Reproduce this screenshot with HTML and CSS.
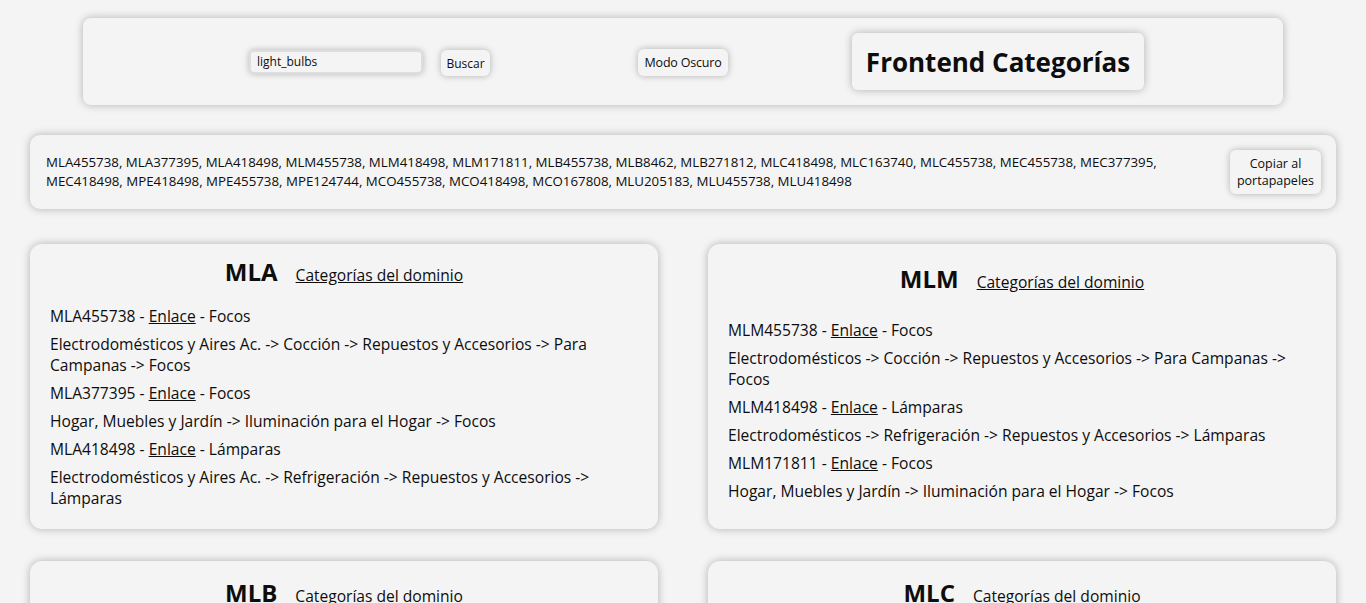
FILE: index.html
```html
<!DOCTYPE html>
<html lang="es">
<head>
<meta charset="utf-8">
<title>Frontend Categorías</title>
<link rel="stylesheet" href="styles.css">
</head>
<body>
<header class="topbar">
  <form class="search">
    <input class="search-input" type="text" value="light_bulbs">
    <button class="btn btn-search" type="button">Buscar</button>
  </form>
  <button class="btn btn-mode" type="button">Modo Oscuro</button>
  <h1 class="title">Frontend Categorías</h1>
</header>

<section class="codes">
  <p class="codes-text">MLA455738, MLA377395, MLA418498, MLM455738, MLM418498, MLM171811, MLB455738, MLB8462, MLB271812, MLC418498, MLC163740, MLC455738, MEC455738, MEC377395, MEC418498, MPE418498, MPE455738, MPE124744, MCO455738, MCO418498, MCO167808, MLU205183, MLU455738, MLU418498</p>
  <button class="btn btn-copy" type="button">Copiar al<br>portapapeles</button>
</section>

<main class="grid">
  <article class="card">
    <div class="card-head"><h2>MLA</h2><a href="#">Categorías del dominio</a></div>
    <div class="card-list">
      <p>MLA455738 - <a href="#">Enlace</a> - Focos</p>
      <p>Electrodomésticos y Aires Ac. -&gt; Cocción -&gt; Repuestos y Accesorios -&gt; Para Campanas -&gt; Focos</p>
      <p>MLA377395 - <a href="#">Enlace</a> - Focos</p>
      <p>Hogar, Muebles y Jardín -&gt; Iluminación para el Hogar -&gt; Focos</p>
      <p>MLA418498 - <a href="#">Enlace</a> - Lámparas</p>
      <p>Electrodomésticos y Aires Ac. -&gt; Refrigeración -&gt; Repuestos y Accesorios -&gt; Lámparas</p>
    </div>
  </article>
  <article class="card">
    <div class="card-head"><h2>MLM</h2><a href="#">Categorías del dominio</a></div>
    <div class="card-list">
      <p>MLM455738 - <a href="#">Enlace</a> - Focos</p>
      <p>Electrodomésticos -&gt; Cocción -&gt; Repuestos y Accesorios -&gt; Para Campanas -&gt; Focos</p>
      <p>MLM418498 - <a href="#">Enlace</a> - Lámparas</p>
      <p>Electrodomésticos -&gt; Refrigeración -&gt; Repuestos y Accesorios -&gt; Lámparas</p>
      <p>MLM171811 - <a href="#">Enlace</a> - Focos</p>
      <p>Hogar, Muebles y Jardín -&gt; Iluminación para el Hogar -&gt; Focos</p>
    </div>
  </article>
  <article class="card card-low">
    <div class="card-head"><h2>MLB</h2><a href="#">Categorías del dominio</a></div>
    <div class="card-list">
      <p>MLB455738 - <a href="#">Enlace</a> - Focos</p>
      <p>Eletrodomésticos -&gt; Fornos e Fogões -&gt; Peças e Acessórios -&gt; Lâmpadas</p>
      <p>MLB8462 - <a href="#">Enlace</a> - Lâmpadas</p>
      <p>Casa, Móveis e Decoração -&gt; Iluminação Residencial -&gt; Lâmpadas</p>
    </div>
  </article>
  <article class="card card-low">
    <div class="card-head"><h2>MLC</h2><a href="#">Categorías del dominio</a></div>
    <div class="card-list">
      <p>MLC418498 - <a href="#">Enlace</a> - Ampolletas</p>
      <p>Electrodomésticos -&gt; Refrigeración -&gt; Repuestos y Accesorios -&gt; Ampolletas</p>
      <p>MLC163740 - <a href="#">Enlace</a> - Ampolletas</p>
      <p>Hogar, Muebles y Jardín -&gt; Iluminación -&gt; Ampolletas</p>
    </div>
  </article>
</main>
</body>
</html>
```
FILE: styles.css
```css
* { box-sizing: border-box; }

body {
  margin: 0;
  padding: 18px 30px 40px;
  background: #f4f4f4;
  color: #0d0d0d;
  font-family: "Open Sans", "Noto Sans", sans-serif;
}

.topbar {
  width: 1200px;
  height: 87px;
  margin: 0 auto;
  display: flex;
  align-items: center;
  padding-left: 166px;
  background: #f4f4f4;
  border-radius: 8px;
  box-shadow: 0 0 8px rgba(0, 0, 0, 0.28);
}

.search {
  display: flex;
  align-items: center;
  margin: 0;
}

.search-input {
  width: 174px;
  height: 24px;
  padding: 0 6px;
  border: 2px solid #dedede;
  border-radius: 5px;
  background: #f4f4f4;
  font-family: inherit;
  font-size: 12px;
  color: #0d0d0d;
  box-shadow: 0 0 6px rgba(0, 0, 0, 0.25);
  outline: none;
}

.btn {
  font-family: inherit;
  font-size: 12px;
  color: #0d0d0d;
  background: #f4f4f4;
  border: none;
  border-radius: 6px;
  box-shadow: 0 0 7px rgba(0, 0, 0, 0.28);
  cursor: pointer;
}

.btn-search {
  margin-left: 18px;
  width: 49px;
  height: 26px;
  padding: 0;
  margin-top: 3px;
}

.btn-mode {
  margin-left: 148px;
  width: 90px;
  height: 27px;
  padding: 0;
  margin-top: 1px;
  font-size: 12.5px;
  letter-spacing: -0.2px;
}

.title {
  margin: 0 0 0 124px;
  width: 292px;
  height: 57px;
  display: flex;
  align-items: center;
  justify-content: center;
  font-size: 26px;
  font-weight: 700;
  border-radius: 6px;
  box-shadow: 0 0 8px rgba(0, 0, 0, 0.28);
}

.codes {
  margin-top: 30px;
  height: 74px;
  display: flex;
  align-items: center;
  justify-content: space-between;
  padding: 0 15px 0 16px;
  border-radius: 10px;
  box-shadow: 0 0 8px rgba(0, 0, 0, 0.28);
}

.codes-text {
  margin: 0;
  max-width: 1160px;
  font-size: 13.3px;
  line-height: 19px;
}

.btn-copy {
  width: 91px;
  height: 44px;
  padding: 0;
  font-size: 12.5px;
  line-height: 17px;
  flex: none;
}

.grid {
  margin-top: 35px;
  display: grid;
  grid-template-columns: 1fr 1fr;
  column-gap: 50px;
  row-gap: 32px;
}

.card {
  display: flex;
  flex-direction: column;
  justify-content: space-evenly;
  padding: 12px 20px 20px;
  border-radius: 12px;
  box-shadow: 0 0 8px rgba(0, 0, 0, 0.28);
}

.card-low {
  padding-top: 16px;
}

.card-head {
  display: flex;
  justify-content: center;
  align-items: baseline;
  gap: 18px;
}

.card-head h2 {
  margin: 0;
  font-size: 24px;
  line-height: 32px;
  font-weight: 700;
}

.card-head a,
.card-list a {
  color: #0d0d0d;
  font-size: 15.6px;
}

.card-list {
  margin-top: 18px;
  font-size: 15.6px;
  line-height: 21px;
}

.card-list p {
  margin: 0 0 7px;
}

.card-list p:last-child {
  margin-bottom: 0;
}
```
